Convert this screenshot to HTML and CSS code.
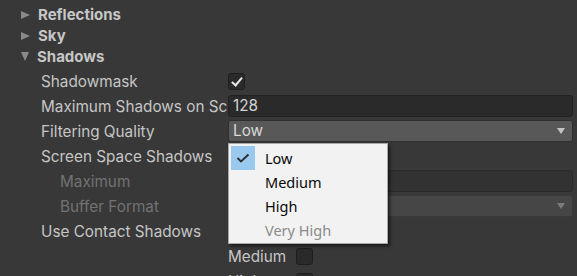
FILE: index.html
```html
<!DOCTYPE html>
<html>

<head>
    <title>Lighting Inspector</title>
    <link rel="stylesheet" href="styles.css">
</head>

<body>
    <div class="inspector">
        <div class="foldout"><span class="arrow right"></span>Reflections</div>
        <div class="foldout"><span class="arrow right"></span>Sky</div>
        <div class="foldout"><span class="arrow down"></span>Shadows</div>

        <div class="props">
            <div class="row">
                <div class="label">Shadowmask</div>
                <div class="field"><span class="checkbox checked"></span></div>
            </div>
            <div class="row">
                <div class="label">Maximum Shadows on Screen</div>
                <div class="field"><div class="number">128</div></div>
            </div>
            <div class="row">
                <div class="label">Filtering Quality</div>
                <div class="field"><div class="dropdown">Low<span class="caret"></span></div></div>
            </div>
            <div class="row">
                <div class="label">Screen Space Shadows</div>
                <div class="field"></div>
            </div>
            <div class="row disabled">
                <div class="label indent">Maximum</div>
                <div class="field"><div class="number"></div></div>
            </div>
            <div class="row disabled">
                <div class="label indent">Buffer Format</div>
                <div class="field"><div class="dropdown"><span class="caret"></span></div></div>
            </div>
            <div class="row">
                <div class="label">Use Contact Shadows</div>
                <div class="field"></div>
            </div>
            <div class="row">
                <div class="label"></div>
                <div class="field sub"><span class="sub-label">Medium</span><span class="checkbox"></span></div>
            </div>
            <div class="row">
                <div class="label"></div>
                <div class="field sub"><span class="sub-label">High</span><span class="checkbox"></span></div>
            </div>
        </div>

        <div class="popup">
            <div class="item selected"><span class="tick"><svg width="14" height="10" viewBox="0 0 14 10"><path d="M1.5 5 L5 8.5 L12.5 1.5" fill="none" stroke="#2b2b2b" stroke-width="1.8"/></svg></span>Low</div>
            <div class="item"><span class="tick"></span>Medium</div>
            <div class="item"><span class="tick"></span>High</div>
            <div class="item off"><span class="tick"></span>Very High</div>
        </div>
    </div>
</body>

</html>
```

FILE: styles.css
```css
body {
    background: #383838;
    font-family: 'Inter', sans-serif;
    font-size: 15.3px;
    color: #c6c6c6;
    margin: 0;
    padding: 0;
    overflow: hidden;
}

.inspector {
    position: relative;
    padding-top: 4px;
    padding-right: 4px;
}

.foldout {
    display: flex;
    align-items: center;
    height: 21px;
    font-weight: bold;
    font-size: 15px;
}

.arrow {
    width: 0;
    height: 0;
    margin-left: 21px;
    margin-right: 8px;
}

.arrow.right {
    border-top: 4.5px solid transparent;
    border-bottom: 4.5px solid transparent;
    border-left: 9px solid #8a8a8a;
}

.arrow.down {
    border-left: 4.5px solid transparent;
    border-right: 4.5px solid transparent;
    border-top: 9px solid #8a8a8a;
}

.props {
    margin-top: 1.5px;
}

.row {
    display: flex;
    align-items: center;
    height: 25px;
}

.label {
    width: 187px;
    flex-shrink: 0;
    padding-left: 41px;
    white-space: nowrap;
    overflow: hidden;
}

.label.indent {
    padding-left: 60px;
}

.field {
    flex: 1;
    display: flex;
    align-items: center;
}

.disabled .label {
    color: #727272;
}

.checkbox {
    box-sizing: border-box;
    width: 17px;
    height: 17px;
    background: #2a2a2a;
    border: 1px solid #1e1e1e;
    border-radius: 3px;
    position: relative;
}

.checkbox.checked::after {
    content: "";
    position: absolute;
    left: 5px;
    top: 1px;
    width: 4px;
    height: 9px;
    border-right: 2px solid #e8e8e8;
    border-bottom: 2px solid #e8e8e8;
    transform: rotate(40deg);
}

.number {
    box-sizing: border-box;
    flex: 1;
    height: 22px;
    background: #2a2a2a;
    border: 1px solid #212121;
    border-radius: 3px;
    padding-left: 4px;
    line-height: 20px;
    color: #d2d2d2;
}

.dropdown {
    box-sizing: border-box;
    flex: 1;
    height: 22px;
    background: #585858;
    border: 1px solid #303030;
    border-radius: 3px;
    padding-left: 4px;
    line-height: 20px;
    color: #d8d8d8;
    display: flex;
    align-items: center;
}

.caret {
    width: 0;
    height: 0;
    margin-left: auto;
    margin-right: 7px;
    border-left: 4.5px solid transparent;
    border-right: 4.5px solid transparent;
    border-top: 6px solid #c4c4c4;
}

.disabled .number {
    background: #323232;
    border-color: #2a2a2a;
}

.disabled .dropdown {
    background: #464646;
    border-color: #3a3a3a;
}

.disabled .caret {
    border-top-color: #7a7a7a;
}

.sub {
    gap: 8px;
}

.sub-label {
    width: 60px;
}

.popup {
    position: absolute;
    left: 228px;
    top: 143px;
    box-sizing: border-box;
    width: 160px;
    height: 101px;
    background: #f2f2f2;
    border: 1px solid #a8a8a8;
    box-shadow: 2px 2px 3px rgba(0, 0, 0, 0.55);
    padding-top: 2px;
    font-family: 'Noto Sans', sans-serif;
    font-size: 14.5px;
    color: #0a0a0a;
}

.item {
    display: flex;
    align-items: center;
    height: 24px;
}

.tick {
    width: 24px;
    height: 24px;
    margin-left: 2px;
    margin-right: 10px;
    display: flex;
    align-items: center;
    justify-content: center;
}

.selected .tick {
    background: #99c9ef;
}

.item.off {
    color: #8a8a8a;
}
```
